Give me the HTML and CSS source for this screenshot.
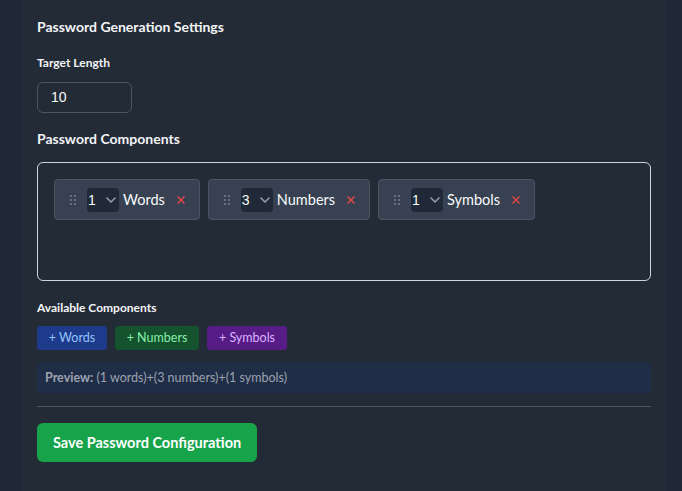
FILE: index.html
```html
<!DOCTYPE html>
<html>
<head>
<meta charset="utf-8">
<link rel="stylesheet" href="styles.css">
</head>
<body>
<div class="panel">
  <h2 class="title">Password Generation Settings</h2>
  <label class="label">Target Length</label>
  <div class="input">10</div>
  <h3 class="subtitle">Password Components</h3>
  <div class="dropzone">
    <div class="chip">
      <span class="handle"><i></i><i></i><i></i><i></i><i></i><i></i></span>
      <span class="select">1<svg width="12" height="8" viewBox="0 0 12 8"><path d="M1.5 1.5 L6 6 L10.5 1.5" fill="none" stroke="#9ca3af" stroke-width="1.4"/></svg></span>
      <span class="chip-label">Words</span>
      <svg class="remove" width="8" height="8" viewBox="0 0 8 8"><path d="M0.5 0.5 L7.5 7.5 M7.5 0.5 L0.5 7.5" stroke="#ef4444" stroke-width="1.4"/></svg>
    </div>
    <div class="chip">
      <span class="handle"><i></i><i></i><i></i><i></i><i></i><i></i></span>
      <span class="select">3<svg width="12" height="8" viewBox="0 0 12 8"><path d="M1.5 1.5 L6 6 L10.5 1.5" fill="none" stroke="#9ca3af" stroke-width="1.4"/></svg></span>
      <span class="chip-label">Numbers</span>
      <svg class="remove" width="8" height="8" viewBox="0 0 8 8"><path d="M0.5 0.5 L7.5 7.5 M7.5 0.5 L0.5 7.5" stroke="#ef4444" stroke-width="1.4"/></svg>
    </div>
    <div class="chip">
      <span class="handle"><i></i><i></i><i></i><i></i><i></i><i></i></span>
      <span class="select">1<svg width="12" height="8" viewBox="0 0 12 8"><path d="M1.5 1.5 L6 6 L10.5 1.5" fill="none" stroke="#9ca3af" stroke-width="1.4"/></svg></span>
      <span class="chip-label">Symbols</span>
      <svg class="remove" width="8" height="8" viewBox="0 0 8 8"><path d="M0.5 0.5 L7.5 7.5 M7.5 0.5 L0.5 7.5" stroke="#ef4444" stroke-width="1.4"/></svg>
    </div>
  </div>
  <label class="label avail">Available Components</label>
  <div class="adds">
    <button class="add words">+ Words</button>
    <button class="add numbers">+ Numbers</button>
    <button class="add symbols">+ Symbols</button>
  </div>
  <div class="preview"><b>Preview:</b> (1 words)+(3 numbers)+(1 symbols)</div>
  <div class="divider"></div>
  <button class="save">Save Password Configuration</button>
</div>
</body>
</html>
```
FILE: styles.css
```css
html, body {
  margin: 0;
  padding: 0;
  background: #1f2836;
  height: 100%;
}
body {
  font-family: Lato, "Noto Sans", sans-serif;
  color: #f3f4f6;
}
.panel {
  margin: 0 15px 0 21px;
  background: #232b37;
  min-height: 491px;
  box-sizing: border-box;
  padding: 17px 16px 0 16px;
  display: flex;
  flex-direction: column;
  align-items: flex-start;
}
.title {
  margin: 0;
  font-size: 14px;
  font-weight: 700;
  line-height: 20px;
  color: #f3f4f6;
}
.label {
  display: block;
  margin-top: 18px;
  font-size: 12px;
  font-weight: 700;
  line-height: 16px;
  color: #f3f4f6;
}
.input {
  margin-top: 11px;
  width: 95px;
  height: 31px;
  box-sizing: border-box;
  border: 1px solid #4b5563;
  border-radius: 6px;
  padding: 0 13px;
  font-family: "Liberation Sans", Arial, sans-serif;
  font-size: 14px;
  line-height: 29px;
  color: #f9fafb;
}
.subtitle {
  margin: 16px 0 0 0;
  font-size: 14px;
  font-weight: 700;
  line-height: 20px;
  color: #f3f4f6;
}
.dropzone {
  margin-top: 13px;
  align-self: stretch;
  height: 119px;
  box-sizing: border-box;
  border: 1px solid #d1d5db;
  border-radius: 6px;
  padding: 16px;
  display: flex;
  align-items: flex-start;
  gap: 8px;
}
.chip {
  display: flex;
  align-items: center;
  height: 41px;
  box-sizing: border-box;
  background: #374151;
  border: 1px solid #4b5563;
  border-radius: 4px;
  padding: 0 14px 0 14px;
}
.handle {
  display: grid;
  grid-template-columns: 2px 2px;
  gap: 2px 2px;
  margin: 0 11px 0 1px;
}
.handle i {
  width: 2px;
  height: 2px;
  background: #6b7280;
}
.select {
  display: flex;
  align-items: center;
  justify-content: space-between;
  width: 32px;
  height: 24px;
  box-sizing: border-box;
  background: #1f2937;
  border-radius: 4px;
  padding: 0 2px 0 1px;
  font-family: "Liberation Sans", Arial, sans-serif;
  font-size: 14px;
  color: #f9fafb;
}
.chip-label {
  margin-left: 4px;
  font-size: 14.5px;
  color: #f9fafb;
}
.remove {
  margin-left: 12px;
}
.avail {
  margin-top: 19px;
}
.adds {
  margin-top: 10px;
  display: flex;
  gap: 8px;
}
.add {
  height: 24px;
  border: none;
  border-radius: 3px;
  padding: 0;
  font-family: Lato, "Noto Sans", sans-serif;
  font-size: 12.5px;
  line-height: 24px;
}
.add.words { background: #1e3a8a; color: #93c5fd; width: 70px; }
.add.numbers { background: #14532d; color: #86efac; width: 84px; }
.add.symbols { background: #581c87; color: #d8b4fe; width: 80px; }
.preview {
  margin-top: 12px;
  align-self: stretch;
  height: 31px;
  box-sizing: border-box;
  background: #202d47;
  border-radius: 4px;
  padding: 0 8px;
  font-size: 12.5px;
  line-height: 31px;
  color: #9ca3af;
}
.preview b {
  font-weight: 700;
}
.divider {
  margin-top: 13px;
  align-self: stretch;
  height: 1px;
  background: #4b5563;
}
.save {
  margin-top: 16px;
  height: 39px;
  border: none;
  border-radius: 6px;
  background: #16a34a;
  color: #ffffff;
  font-family: Lato, "Noto Sans", sans-serif;
  font-size: 14.5px;
  font-weight: 700;
  padding: 0 16px;
}
```
